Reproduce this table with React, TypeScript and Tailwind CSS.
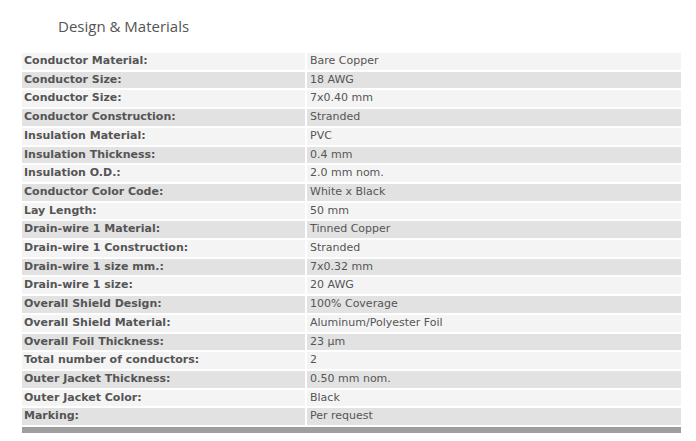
const specs: [string, string][] = [
  ['Conductor Material:', 'Bare Copper'],
  ['Conductor Size:', '18 AWG'],
  ['Conductor Size:', '7x0.40 mm'],
  ['Conductor Construction:', 'Stranded'],
  ['Insulation Material:', 'PVC'],
  ['Insulation Thickness:', '0.4 mm'],
  ['Insulation O.D.:', '2.0 mm nom.'],
  ['Conductor Color Code:', 'White x Black'],
  ['Lay Length:', '50 mm'],
  ['Drain-wire 1 Material:', 'Tinned Copper'],
  ['Drain-wire 1 Construction:', 'Stranded'],
  ['Drain-wire 1 size mm.:', '7x0.32 mm'],
  ['Drain-wire 1 size:', '20 AWG'],
  ['Overall Shield Design:', '100% Coverage'],
  ['Overall Shield Material:', 'Aluminum/Polyester Foil'],
  ['Overall Foil Thickness:', '23 µm'],
  ['Total number of conductors:', '2'],
  ['Outer Jacket Thickness:', '0.50 mm nom.'],
  ['Outer Jacket Color:', 'Black'],
  ['Marking:', 'Per request'],
]

export default function App() {
  return (
    <div className="min-h-screen bg-white pl-[20px] pr-[13px] text-[#555]">
      <h2 className="pl-[38px] pt-[15px] pb-[14px] text-[15px] leading-[22px] font-['Open_Sans',sans-serif] text-[#555]">
        Design &amp; Materials
      </h2>
      <table className="w-full border-separate border-spacing-[2px] font-['DejaVu_Sans',Verdana,sans-serif] text-[11px]">
        <tbody>
          {specs.map(([label, value], i) => (
            <tr key={i} className={i % 2 === 0 ? 'bg-[#f4f4f4]' : 'bg-[#e2e2e2]'}>
              <td className="w-[283px] px-[2px] py-px leading-[14.7px] font-bold">{label}</td>
              <td className="px-[3px] py-px leading-[14.7px]">{value}</td>
            </tr>
          ))}
          <tr>
            <td colSpan={2} className="h-[6px] bg-[#9e9e9e] p-0"></td>
          </tr>
        </tbody>
      </table>
    </div>
  )
}
